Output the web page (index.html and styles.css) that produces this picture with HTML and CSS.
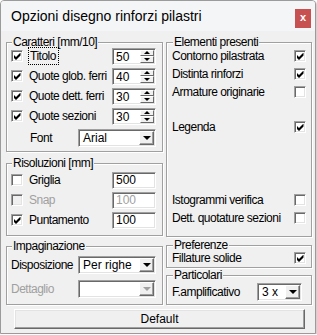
FILE: index.html
```html
<!DOCTYPE html>
<html lang="it">
<head>
    <meta charset="UTF-8">
    <title>Opzioni disegno rinforzi pilastri</title>
    <link rel="stylesheet" href="styles.css">
</head>
<body>
    <div class="win">
        <div class="titlebar">
            <span class="title">Opzioni disegno rinforzi pilastri</span>
            <span class="close">x</span>
        </div>

        <div class="client">
            <div class="cols">
                <!-- colonna sinistra -->
                <div class="col left">
                    <fieldset class="grp car">
                        <legend>Caratteri [mm/10]</legend>
                        <div class="row">
                            <span class="chk on"></span>
                            <span class="lbl focus">Titolo</span>
                            <div class="spin"><span class="val">50</span><span class="arrows"><i class="up"></i><i class="dn"></i></span></div>
                        </div>
                        <div class="row">
                            <span class="chk on"></span>
                            <span class="lbl">Quote glob. ferri</span>
                            <div class="spin"><span class="val">40</span><span class="arrows"><i class="up"></i><i class="dn"></i></span></div>
                        </div>
                        <div class="row">
                            <span class="chk on"></span>
                            <span class="lbl">Quote dett. ferri</span>
                            <div class="spin"><span class="val">30</span><span class="arrows"><i class="up"></i><i class="dn"></i></span></div>
                        </div>
                        <div class="row">
                            <span class="chk on"></span>
                            <span class="lbl">Quote sezioni</span>
                            <div class="spin"><span class="val">30</span><span class="arrows"><i class="up"></i><i class="dn"></i></span></div>
                        </div>
                        <div class="row font">
                            <span class="lbl">Font</span>
                            <div class="combo"><span class="txt">Arial</span><span class="btn"></span></div>
                        </div>
                    </fieldset>

                    <fieldset class="grp ris">
                        <legend>Risoluzioni [mm]</legend>
                        <div class="row">
                            <span class="chk"></span>
                            <span class="lbl">Griglia</span>
                            <div class="edit">500</div>
                        </div>
                        <div class="row">
                            <span class="chk off"></span>
                            <span class="lbl dis">Snap</span>
                            <div class="edit dis">100</div>
                        </div>
                        <div class="row">
                            <span class="chk on"></span>
                            <span class="lbl">Puntamento</span>
                            <div class="edit">100</div>
                        </div>
                    </fieldset>

                    <fieldset class="grp imp">
                        <legend>Impaginazione</legend>
                        <div class="row tall">
                            <span class="lbl">Disposizione</span>
                            <div class="combo"><span class="txt">Per righe</span><span class="btn"></span></div>
                        </div>
                        <div class="row tall">
                            <span class="lbl dis">Dettaglio</span>
                            <div class="combo off"><span class="txt"></span><span class="btn"></span></div>
                        </div>
                    </fieldset>
                </div>

                <!-- colonna destra -->
                <div class="col right">
                    <fieldset class="grp ele">
                        <legend>Elementi presenti</legend>
                        <div class="erow"><span class="lbl">Contorno pilastrata</span><span class="chk on"></span></div>
                        <div class="erow"><span class="lbl">Distinta rinforzi</span><span class="chk on"></span></div>
                        <div class="erow"><span class="lbl">Armature originarie</span><span class="chk"></span></div>
                        <div class="erow leg"><span class="lbl">Legenda</span><span class="chk on"></span></div>
                        <div class="erow isto"><span class="lbl">Istogrammi verifica</span><span class="chk"></span></div>
                        <div class="erow"><span class="lbl">Dett. quotature sezioni</span><span class="chk"></span></div>
                    </fieldset>

                    <fieldset class="grp pref">
                        <legend>Preferenze</legend>
                        <div class="erow short"><span class="lbl">Fillature solide</span><span class="chk on"></span></div>
                    </fieldset>

                    <fieldset class="grp part">
                        <legend>Particolari</legend>
                        <div class="erow wide">
                            <span class="lbl">F.amplificativo</span>
                            <div class="combo small"><span class="txt">3 x</span><span class="btn"></span></div>
                        </div>
                    </fieldset>
                </div>
            </div>

            <button class="btn-default">Default</button>
        </div>
    </div>
</body>
</html>
```

FILE: styles.css
```css
*{
    box-sizing: border-box;
}
body{
    margin: 0;
    background: #fff;
    font-family: "Liberation Sans", Arial, sans-serif;
    font-size: 12px;
    letter-spacing: -0.5px;
    color: #000;
}

/* finestra */
.win{
    width: 316px;
    height: 334px;
    border: 1px solid #9b9b9b;
    border-radius: 4px 4px 0 0;
    background: #f0f0f0;
    box-shadow: 1px 1px 1px rgba(0,0,0,.2);
}
.titlebar{
    display: flex;
    height: 30px;
    background: #f4f5f7;
    border-radius: 3px 3px 0 0;
}
.title{
    flex: 1;
    padding-left: 10px;
    line-height: 30px;
    font-size: 14px;
    letter-spacing: 0;
}
.close{
    width: 16px;
    height: 19px;
    margin: 8px 4px 0 0;
    background: #c75050;
    color: #fff;
    font-weight: bold;
    font-size: 11px;
    line-height: 17px;
    text-align: center;
    letter-spacing: 0;
}

.client{
    padding: 7px 3px 0 5px;
}
.cols{
    display: flex;
    gap: 3px;
}
.col{
    display: flex;
    flex-direction: column;
}
.left{
    width: 157px;
}
.right{
    width: 146px;
}

/* group box */
.grp{
    margin: 0;
    min-width: 0;
    padding: 0 6px 0 4px;
    border: 1px solid #a0a0a0;
    box-shadow: inset 1px 1px 0 #fff, 1px 1px 0 #fff;
}
.grp legend{
    padding: 0 1px;
    margin-left: 1px;
    line-height: 8px;
    background: #f0f0f0;
}
.car{ height: 114px; }
.ris{ height: 77px; margin-top: 7px; padding-top: 3px; }
.imp{ height: 63px; margin-top: 6px; padding-top: 3px; }
.right .grp{ padding: 0 5px; }
.ele{ height: 199px; padding-top: 1px !important; }
.pref{ height: 27px; margin-top: 4px; padding-top: 1px !important; }
.part{ height: 34px; margin-top: 3px; padding-top: 3px !important; }

/* righe */
.row{
    display: flex;
    align-items: center;
    height: 20px;
}
.row.font{
    margin-top: 2px;
}
.row.font .lbl{
    margin-left: 19px;
}
.row.tall{
    height: 24px;
}
.erow{
    display: flex;
    align-items: center;
    justify-content: space-between;
    height: 18px;
}
.erow.leg{ margin-top: 17px; }
.erow.isto{ margin-top: 55px; }
.erow.short{ height: 16px; }
.erow.wide{ height: 20px; }

.lbl{
    white-space: nowrap;
}
.lbl.dis{
    color: #a0a0a0;
}
.focus{
    outline: 1px dotted #000;
    outline-offset: 1px;
    margin-left: 1px;
    padding-right: 1px;
}

/* checkbox */
.chk{
    display: flex;
    align-items: center;
    justify-content: center;
    flex: none;
    width: 12px;
    height: 12px;
    margin-right: 6px;
    border: 1px solid;
    border-color: #a0a0a0 #fff #fff #a0a0a0;
    box-shadow: inset 1px 1px #696969, inset -1px -1px #e3e3e3;
    background: #fff;
}
.erow .chk{
    margin-right: 0;
}
.chk.off{
    background: #f0f0f0;
}
.chk.on::after{
    content: "";
    width: 7px;
    height: 7px;
    background: #000;
    clip-path: polygon(0 2px, 2.5px 4.5px, 7px 0, 7px 3px, 2.5px 7.5px, 0 5px);
}

/* campi */
.spin, .edit, .combo{
    margin-left: auto;
    border: 1px solid;
    border-color: #a0a0a0 #fff #fff #a0a0a0;
    box-shadow: inset 1px 1px #696969, inset -1px -1px #e3e3e3;
    background: #fff;
    letter-spacing: 0;
}
.spin{
    display: flex;
    width: 44px;
    height: 17px;
    padding: 1px;
}
.spin .val{
    flex: 1;
    padding-left: 2px;
    line-height: 14px;
}
.arrows{
    display: flex;
    flex-direction: column;
    width: 14px;
}
.arrows i{
    flex: 1;
    display: flex;
    align-items: center;
    justify-content: center;
    background: #f0f0f0;
    border: 1px solid;
    border-color: #fff #696969 #696969 #fff;
}
.arrows .up::after{
    content: "";
    border-style: solid;
    border-color: transparent transparent #000 transparent;
    border-width: 0 3px 3px 3px;
}
.arrows .dn::after{
    content: "";
    border-style: solid;
    border-color: #000 transparent transparent transparent;
    border-width: 3px 3px 0 3px;
}

.edit{
    width: 44px;
    height: 17px;
    padding-left: 3px;
    line-height: 15px;
}
.edit.dis{
    color: #a0a0a0;
}

.combo{
    display: flex;
    width: 78px;
    height: 18px;
    padding: 1px;
}
.combo.small{
    width: 45px;
    margin-right: 4px;
}
.combo .txt{
    flex: 1;
    padding-left: 3px;
    line-height: 15px;
}
.combo .btn{
    display: flex;
    align-items: center;
    justify-content: center;
    width: 15px;
    background: #f0f0f0;
    border: 1px solid;
    border-color: #fff #696969 #696969 #fff;
    box-shadow: inset -1px -1px #a0a0a0;
}
.combo .btn::after{
    content: "";
    border-style: solid;
    border-color: #000 transparent transparent transparent;
    border-width: 4px 4px 0 4px;
}
.combo.off .btn::after{
    border-top-color: #a0a0a0;
}

/* pulsante */
.btn-default{
    display: block;
    width: 291px;
    height: 20px;
    margin: 4px 0 0 8px;
    padding: 0;
    font: inherit;
    letter-spacing: 0;
    color: #000;
    background: #f0f0f0;
    border: 1px solid;
    border-color: #fff #696969 #696969 #fff;
    box-shadow: inset -1px -1px #a0a0a0, inset 1px 1px #e3e3e3;
}
```
